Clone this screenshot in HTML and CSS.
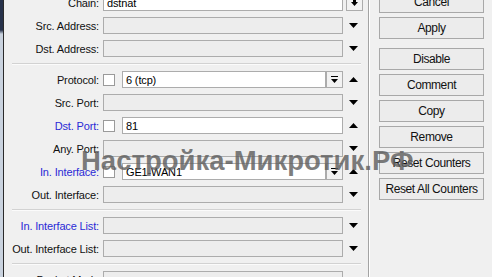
FILE: index.html
```html
<!DOCTYPE html>
<html lang="ru">
<head>
<meta charset="UTF-8">
<title>NAT Rule</title>
<link rel="stylesheet" href="styles.css">
</head>
<body>

<div class="window">
    <div class="edge"></div>

    <div class="form">
        <div class="row">
            <label class="lbl">Chain:</label>
            <div class="field"><div class="box white">dstnat</div></div>
            <div class="arr"><div class="drop chain-drop"><svg width="7" height="7" viewBox="0 0 7 7"><rect x="2" y="0" width="3" height="3" fill="#000"/><polygon points="0,3 7,3 3.5,7" fill="#000"/></svg></div></div>
        </div>
        <div class="row">
            <label class="lbl">Src. Address:</label>
            <div class="field"><div class="box"></div></div>
            <div class="arr"><svg class="tri" width="9" height="5" viewBox="0 0 9 5"><polygon points="0,0 9,0 4.5,5" fill="#000"/></svg></div>
        </div>
        <div class="row">
            <label class="lbl">Dst. Address:</label>
            <div class="field"><div class="box"></div></div>
            <div class="arr"><svg class="tri" width="9" height="5" viewBox="0 0 9 5"><polygon points="0,0 9,0 4.5,5" fill="#000"/></svg></div>
        </div>

        <div class="sep"></div>

        <div class="row">
            <label class="lbl">Protocol:</label>
            <div class="field">
                <div class="check"></div>
                <div class="box white">6 (tcp)</div>
                <div class="drop"><svg width="7" height="7" viewBox="0 0 7 7"><rect x="0" y="0" width="7" height="1" fill="#000"/><polygon points="0,3 7,3 3.5,7" fill="#000"/></svg></div>
            </div>
            <div class="arr"><svg class="tri" width="9" height="5" viewBox="0 0 9 5"><polygon points="0,5 9,5 4.5,0" fill="#000"/></svg></div>
        </div>
        <div class="row">
            <label class="lbl">Src. Port:</label>
            <div class="field"><div class="box"></div></div>
            <div class="arr"><svg class="tri" width="9" height="5" viewBox="0 0 9 5"><polygon points="0,0 9,0 4.5,5" fill="#000"/></svg></div>
        </div>
        <div class="row">
            <label class="lbl blue">Dst. Port:</label>
            <div class="field">
                <div class="check"></div>
                <div class="box white">81</div>
            </div>
            <div class="arr"><svg class="tri" width="9" height="5" viewBox="0 0 9 5"><polygon points="0,5 9,5 4.5,0" fill="#000"/></svg></div>
        </div>
        <div class="row">
            <label class="lbl">Any. Port:</label>
            <div class="field"><div class="box"></div></div>
            <div class="arr"><svg class="tri" width="9" height="5" viewBox="0 0 9 5"><polygon points="0,0 9,0 4.5,5" fill="#000"/></svg></div>
        </div>
        <div class="row">
            <label class="lbl blue">In. Interface:</label>
            <div class="field">
                <div class="check"></div>
                <div class="box white">GE1-WAN1</div>
                <div class="drop"><svg width="7" height="7" viewBox="0 0 7 7"><rect x="0" y="0" width="7" height="1" fill="#000"/><polygon points="0,3 7,3 3.5,7" fill="#000"/></svg></div>
            </div>
            <div class="arr"><svg class="tri" width="9" height="5" viewBox="0 0 9 5"><polygon points="0,5 9,5 4.5,0" fill="#000"/></svg></div>
        </div>
        <div class="row">
            <label class="lbl">Out. Interface:</label>
            <div class="field"><div class="box"></div></div>
            <div class="arr"><svg class="tri" width="9" height="5" viewBox="0 0 9 5"><polygon points="0,0 9,0 4.5,5" fill="#000"/></svg></div>
        </div>

        <div class="sep"></div>

        <div class="row">
            <label class="lbl blue">In. Interface List:</label>
            <div class="field"><div class="box"></div></div>
            <div class="arr"><svg class="tri" width="9" height="5" viewBox="0 0 9 5"><polygon points="0,0 9,0 4.5,5" fill="#000"/></svg></div>
        </div>
        <div class="row">
            <label class="lbl">Out. Interface List:</label>
            <div class="field"><div class="box"></div></div>
            <div class="arr"><svg class="tri" width="9" height="5" viewBox="0 0 9 5"><polygon points="0,0 9,0 4.5,5" fill="#000"/></svg></div>
        </div>

        <div class="sep"></div>

        <div class="row">
            <label class="lbl">Packet Mark:</label>
            <div class="field"><div class="box"></div></div>
            <div class="arr"></div>
        </div>
    </div>

    <div class="side">
        <button class="btn">Cancel</button>
        <button class="btn btn-gap">Apply</button>
        <button class="btn">Disable</button>
        <button class="btn">Comment</button>
        <button class="btn">Copy</button>
        <button class="btn">Remove</button>
        <button class="btn">Reset Counters</button>
        <button class="btn">Reset All Counters</button>
    </div>

    <div class="watermark">Настройка-Микротик.РФ</div>
</div>

</body>
</html>
```

FILE: styles.css
```css
body {
    margin: 0;
    background-color: #f0f0f0;
    font-family: "Liberation Sans", Arial, sans-serif;
    font-size: 11px;
    letter-spacing: -0.15px;
    color: #000;
    overflow: hidden;
}

.window {
    position: relative;
    display: flex;
    height: 277px;
    overflow: hidden;
}

.edge {
    width: 3px;
    flex: none;
    background: linear-gradient(#27324b 0, #27324b 30px, #c9d2de 34px, #c9d2de 100%);
    border-right: 1px solid #2a2a2a;
}

.form {
    width: 364px;
    flex: none;
    margin-top: -6px;
}

.row {
    display: flex;
    align-items: center;
    height: 17px;
    margin-bottom: 6px;
}

.lbl {
    width: 95px;
    margin-right: 4px;
    text-align: right;
    white-space: nowrap;
    color: #111;
}

.lbl.blue {
    color: #2a2ad6;
}

.field {
    width: 240px;
    height: 17px;
    display: flex;
    align-items: center;
}

.box {
    flex: 1;
    height: 17px;
    box-sizing: border-box;
    border: 1px solid #acacac;
    background-color: #ededed;
    padding: 1px 3px 0;
    line-height: 14px;
    white-space: nowrap;
}

.box.white {
    background-color: #fff;
}

.check {
    width: 12px;
    height: 12px;
    box-sizing: border-box;
    border: 1px solid #9a9a9a;
    background-color: #fff;
    margin-right: 7px;
}

.drop {
    width: 17px;
    height: 17px;
    box-sizing: border-box;
    border: 1px solid #acacac;
    background-color: #f2f2f2;
    display: flex;
    align-items: center;
    justify-content: center;
}

.chain-drop {
    margin-left: 2px;
}

.arr {
    width: 21px;
    height: 17px;
    display: flex;
    align-items: center;
    justify-content: center;
}

.sep {
    margin-left: 8px;
    width: 349px;
    border-top: 1px solid #d2d2d2;
    border-bottom: 1px solid #fbfbfb;
    margin-bottom: 6px;
}

.side {
    width: 105px;
    flex: none;
    border-left: 1px solid #a3a3a3;
    box-shadow: inset 1px 0 #fff;
    padding-left: 10px;
    margin-top: -9px;
    display: flex;
    flex-direction: column;
}

.btn {
    height: 22px;
    width: 105px;
    margin-bottom: 4px;
    border: 1px solid #a8a8a8;
    background-color: #ececec;
    font-family: "Liberation Sans", Arial, sans-serif;
    font-size: 12px;
    letter-spacing: -0.4px;
    color: #111;
    padding: 0;
}

.btn-gap {
    margin-bottom: 9px;
}

.watermark {
    position: absolute;
    left: 81px;
    top: 145px;
    font-size: 27.5px;
    font-weight: bold;
    letter-spacing: 0;
    color: rgba(95, 95, 95, 0.82);
    white-space: nowrap;
    pointer-events: none;
}
```
